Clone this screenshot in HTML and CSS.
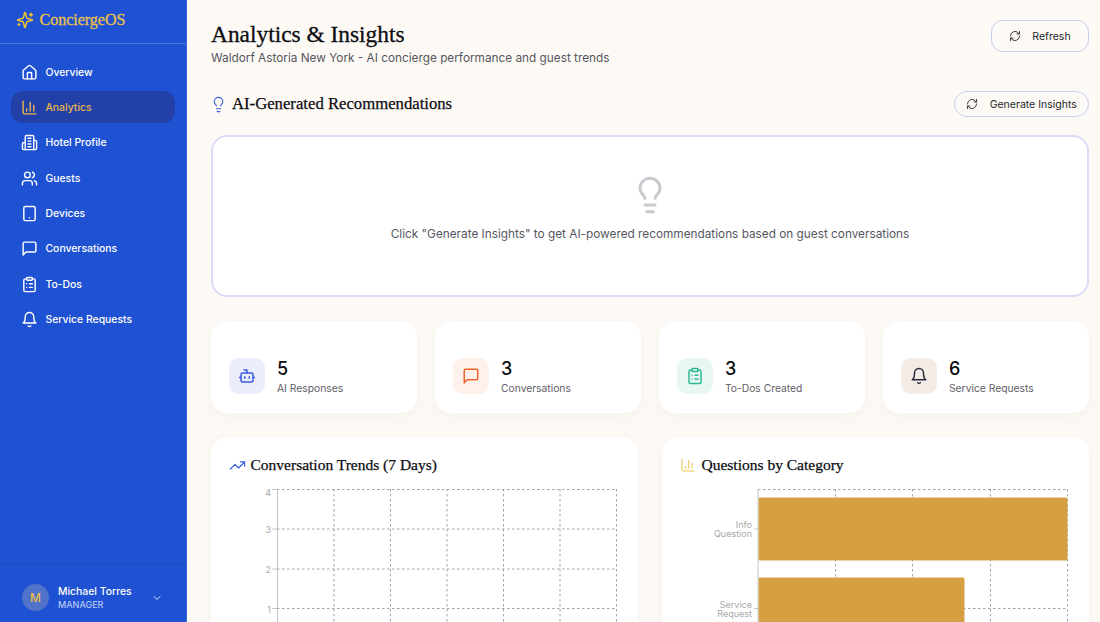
FILE: index.html
```html
<!DOCTYPE html>
<html lang="en">
<head>
    <meta charset="UTF-8">
    <meta name="viewport" content="width=device-width, initial-scale=1.0">
    <title>Analytics &amp; Insights - ConciergeOS</title>
    <link rel="stylesheet" href="styles.css">
</head>
<body>
    <!-- Icon set -->
    <svg class="icon-defs" aria-hidden="true">
        <symbol id="i-house" viewBox="0 0 24 24"><path d="M15 21v-8a1 1 0 0 0-1-1h-4a1 1 0 0 0-1 1v8"/><path d="M3 10a2 2 0 0 1 .709-1.528l7-5.999a2 2 0 0 1 2.582 0l7 5.999A2 2 0 0 1 21 10v9a2 2 0 0 1-2 2H5a2 2 0 0 1-2-2z"/></symbol>
        <symbol id="i-chart" viewBox="0 0 24 24"><path d="M3 3v16a2 2 0 0 0 2 2h16"/><path d="M18 17V9"/><path d="M13 17V5"/><path d="M8 17v-3"/></symbol>
        <symbol id="i-hotel" viewBox="0 0 24 24"><path d="M6 22V4a2 2 0 0 1 2-2h8a2 2 0 0 1 2 2v18Z"/><path d="M6 12H4a2 2 0 0 0-2 2v6a2 2 0 0 0 2 2h2"/><path d="M18 9h2a2 2 0 0 1 2 2v9a2 2 0 0 1-2 2h-2"/><path d="M10 6h4"/><path d="M10 10h4"/><path d="M10 14h4"/><path d="M10 18h4"/></symbol>
        <symbol id="i-users" viewBox="0 0 24 24"><path d="M16 21v-2a4 4 0 0 0-4-4H6a4 4 0 0 0-4 4v2"/><circle cx="9" cy="7" r="4"/><path d="M22 21v-2a4 4 0 0 0-3-3.87"/><path d="M16 3.13a4 4 0 0 1 0 7.75"/></symbol>
        <symbol id="i-tablet" viewBox="0 0 24 24"><rect x="4" y="2" width="16" height="20" rx="2"/><path d="M12 18h.01"/></symbol>
        <symbol id="i-message" viewBox="0 0 24 24"><path d="M21 15a2 2 0 0 1-2 2H7l-4 4V5a2 2 0 0 1 2-2h14a2 2 0 0 1 2 2z"/></symbol>
        <symbol id="i-clipboard" viewBox="0 0 24 24"><rect x="8" y="2" width="8" height="4" rx="1"/><path d="M16 4h2a2 2 0 0 1 2 2v14a2 2 0 0 1-2 2H6a2 2 0 0 1-2-2V6a2 2 0 0 1 2-2h2"/><path d="M12 11h4"/><path d="M12 16h4"/><path d="M8 11h.01"/><path d="M8 16h.01"/></symbol>
        <symbol id="i-bell" viewBox="0 0 24 24"><path d="M6 8a6 6 0 0 1 12 0c0 7 3 9 3 9H3s3-2 3-9"/><path d="M10.3 21a1.94 1.94 0 0 0 3.4 0"/></symbol>
        <symbol id="i-chevron" viewBox="0 0 24 24"><path d="m6 9 6 6 6-6"/></symbol>
        <symbol id="i-sparkles" viewBox="0 0 24 24"><path d="M9.937 15.5A2 2 0 0 0 8.5 14.063l-6.135-1.582a.5.5 0 0 1 0-.962L8.5 9.936A2 2 0 0 0 9.937 8.5l1.582-6.135a.5.5 0 0 1 .963 0L14.063 8.5A2 2 0 0 0 15.5 9.937l6.135 1.581a.5.5 0 0 1 0 .964L15.5 14.063a2 2 0 0 0-1.437 1.437l-1.582 6.135a.5.5 0 0 1-.963 0z"/><path d="M20 3v4"/><path d="M22 5h-4"/><path d="M4 17v2"/><path d="M5 18H3"/></symbol>
        <symbol id="i-bulb" viewBox="0 0 24 24"><path d="M15 14c.2-1 .7-1.7 1.5-2.5 1-.9 1.5-2.2 1.5-3.5A6 6 0 0 0 6 8c0 1 .2 2.2 1.5 3.5.7.7 1.3 1.5 1.5 2.5"/><path d="M9 18h6"/><path d="M10 22h4"/></symbol>
        <symbol id="i-refresh" viewBox="0 0 24 24"><path d="M3 12a9 9 0 0 1 9-9 9.75 9.75 0 0 1 6.74 2.74L21 8"/><path d="M21 3v5h-5"/><path d="M21 12a9 9 0 0 1-9 9 9.75 9.75 0 0 1-6.74-2.74L3 16"/><path d="M8 16H3v5"/></symbol>
        <symbol id="i-bot" viewBox="0 0 24 24"><path d="M12 8V4H8"/><rect x="4" y="8" width="16" height="12" rx="2"/><path d="M2 14h2"/><path d="M20 14h2"/><path d="M15 13v2"/><path d="M9 13v2"/></symbol>
        <symbol id="i-trend" viewBox="0 0 24 24"><path d="M22 7l-8.5 8.5-5-5L2 17"/><path d="M16 7h6v6"/></symbol>
    </svg>

    <div class="layout">
        <!-- Sidebar -->
        <aside class="sidebar">
            <div class="brand">
                <svg class="icon brand-icon"><use href="#i-sparkles"/></svg>
                <span class="brand-name">ConciergeOS</span>
            </div>
            <nav class="nav">
                <a href="#" class="nav-item"><svg class="icon"><use href="#i-house"/></svg>Overview</a>
                <a href="#" class="nav-item active"><svg class="icon"><use href="#i-chart"/></svg>Analytics</a>
                <a href="#" class="nav-item"><svg class="icon"><use href="#i-hotel"/></svg>Hotel Profile</a>
                <a href="#" class="nav-item"><svg class="icon"><use href="#i-users"/></svg>Guests</a>
                <a href="#" class="nav-item"><svg class="icon"><use href="#i-tablet"/></svg>Devices</a>
                <a href="#" class="nav-item"><svg class="icon"><use href="#i-message"/></svg>Conversations</a>
                <a href="#" class="nav-item"><svg class="icon"><use href="#i-clipboard"/></svg>To-Dos</a>
                <a href="#" class="nav-item"><svg class="icon"><use href="#i-bell"/></svg>Service Requests</a>
            </nav>
            <div class="user">
                <div class="avatar">M</div>
                <div class="user-info">
                    <div class="user-name">Michael Torres</div>
                    <div class="user-role">MANAGER</div>
                </div>
                <svg class="icon user-chevron"><use href="#i-chevron"/></svg>
            </div>
        </aside>

        <!-- Main content -->
        <main class="main">
            <header class="page-header">
                <div>
                    <h1 class="page-title">Analytics &amp; Insights</h1>
                    <p class="page-subtitle">Waldorf Astoria New York - AI concierge performance and guest trends</p>
                </div>
                <button class="btn btn-refresh"><svg class="icon"><use href="#i-refresh"/></svg>Refresh</button>
            </header>

            <section class="recs-header">
                <h2 class="recs-title"><svg class="icon recs-icon"><use href="#i-bulb"/></svg>AI-Generated Recommendations</h2>
                <button class="btn btn-generate"><svg class="icon"><use href="#i-refresh"/></svg>Generate Insights</button>
            </section>

            <section class="recs-panel">
                <svg class="icon recs-empty-icon"><use href="#i-bulb"/></svg>
                <p class="recs-empty">Click "Generate Insights" to get AI-powered recommendations based on guest conversations</p>
            </section>

            <section class="stats">
                <div class="stat-card">
                    <div class="stat-icon blue"><svg class="icon"><use href="#i-bot"/></svg></div>
                    <div class="stat-text"><div class="stat-value">5</div><div class="stat-label">AI Responses</div></div>
                </div>
                <div class="stat-card">
                    <div class="stat-icon orange"><svg class="icon"><use href="#i-message"/></svg></div>
                    <div class="stat-text"><div class="stat-value">3</div><div class="stat-label">Conversations</div></div>
                </div>
                <div class="stat-card">
                    <div class="stat-icon green"><svg class="icon"><use href="#i-clipboard"/></svg></div>
                    <div class="stat-text"><div class="stat-value">3</div><div class="stat-label">To-Dos Created</div></div>
                </div>
                <div class="stat-card">
                    <div class="stat-icon dark"><svg class="icon"><use href="#i-bell"/></svg></div>
                    <div class="stat-text"><div class="stat-value">6</div><div class="stat-label">Service Requests</div></div>
                </div>
            </section>

            <section class="charts">
                <div class="chart-card">
                    <h3 class="chart-title"><svg class="icon trend-icon"><use href="#i-trend"/></svg>Conversation Trends (7 Days)</h3>
                    <svg class="chart" width="391" height="240">
                        <g class="grid">
                            <path d="M48 5.5H388M48 45H388M48 85H388M48 124.5H388M48 164H388"/>
                            <path d="M105 5V204M161.500 5V204M218 5V204M274.500 5V204M331 5V204M387.500 5V204"/>
                        </g>
                        <path class="axis" d="M48.500 5V204M43 5.500H48M43 45H48M43 85H48M43 124.500H48"/>
                        <text class="tick" x="42" y="12" text-anchor="end">4</text>
                        <text class="tick" x="42" y="49" text-anchor="end">3</text>
                        <text class="tick" x="42" y="89" text-anchor="end">2</text>
                        <text class="tick" x="42" y="129" text-anchor="end">1</text>
                    </svg>
                </div>
                <div class="chart-card">
                    <h3 class="chart-title"><svg class="icon bars-icon"><use href="#i-chart"/></svg>Questions by Category</h3>
                    <svg class="chart" width="391" height="240">
                        <g class="grid">
                            <path d="M78 5.500H387.500M78 124.500H387.500"/>
                            <path d="M155.500 5V204M232.500 5V204M310.500 5V204M387.500 5V204"/>
                        </g>
                        <rect class="bar" x="78.500" y="13.500" width="309" height="63" rx="1.500"/>
                        <rect class="bar" x="78.500" y="93.500" width="206" height="63" rx="1.500"/>
                        <path class="axis" d="M78 5V204M74 45H78M74 124.500H78"/>
                        <text class="tick" x="72" y="44" text-anchor="end">Info</text>
                        <text class="tick" x="72" y="53" text-anchor="end">Question</text>
                        <text class="tick" x="72" y="124" text-anchor="end">Service</text>
                        <text class="tick" x="72" y="133" text-anchor="end">Request</text>
                    </svg>
                </div>
            </section>
        </main>
    </div>
</body>
</html>
```

FILE: styles.css
```css
* {
    box-sizing: border-box;
}

body {
    margin: 0;
    font-family: Inter, "Liberation Sans", sans-serif;
    background-color: #fdfaf6;
    color: #0d0d12;
    height: 100vh;
    overflow: hidden;
}

.icon-defs {
    display: none;
}

.icon {
    width: 17px;
    height: 17px;
    flex-shrink: 0;
    fill: none;
    stroke: currentColor;
    stroke-width: 2;
    stroke-linecap: round;
    stroke-linejoin: round;
}

.layout {
    display: flex;
    height: 100vh;
}

/* Sidebar */
.sidebar {
    width: 187px;
    flex-shrink: 0;
    display: flex;
    flex-direction: column;
    background-color: #1f52d3;
    border-right: 1px solid #3565dc;
    color: #fff;
}

.brand {
    height: 44px;
    display: flex;
    align-items: center;
    gap: 5.500px;
    padding: 0 0 4px 16px;
    border-bottom: 1px solid #4a74dd;
    color: #f2c230;
}

.brand-icon {
    width: 18px;
    height: 18px;
}

.brand-name {
    font-family: "Liberation Serif", serif;
    font-size: 16px;
    -webkit-text-stroke: 0.3px #ecc046;
    color: #ecc046;
}

.nav {
    flex: 1;
    padding: 12px 11px 0;
}

.nav-item {
    height: 32px;
    margin-bottom: 3.4px;
    display: flex;
    align-items: center;
    gap: 7.500px;
    padding-left: 10px;
    border-radius: 12px;
    color: #fff;
    font-size: 10.400px;
    font-weight: 500;
    text-decoration: none;
}

.nav-item.active {
    background-color: #2340a8;
    color: #e7b54c;
}

.user {
    height: 59px;
    display: flex;
    align-items: center;
    padding: 9px 0 0 22px;
    border-top: 1px solid #1c49bd;
}

.avatar {
    width: 27px;
    height: 27px;
    border-radius: 50%;
    background-color: #5273ca;
    color: #e9bb50;
    font-size: 12px;
    font-weight: 500;
    display: flex;
    align-items: center;
    justify-content: center;
}

.user-info {
    flex: 1;
    margin-left: 9px;
}

.user-name {
    margin-top: 1px;
    font-size: 10.400px;
    font-weight: 500;
    line-height: 13px;
}

.user-role {
    font-size: 9px;
    font-weight: 500;
    line-height: 13px;
    color: #b6c7f3;
}

.user-chevron {
    width: 12px;
    height: 12px;
    margin-right: 23px;
    color: #dbe3fa;
}

/* Main content */
.main {
    flex: 1;
    min-width: 0;
    padding: 20px 11px 0 24px;
    overflow: hidden;
}

.page-header {
    display: flex;
    justify-content: space-between;
    align-items: flex-start;
    height: 71px;
}

.page-title {
    margin: 0;
    font-family: "Liberation Serif", serif;
    font-size: 23.400px;
    font-weight: 400;
    line-height: 28px;
    -webkit-text-stroke: 0.3px #0d0d12;
}

.page-subtitle {
    margin: 2px 0 0;
    font-size: 11.800px;
    line-height: 17px;
    color: #55565f;
}

.btn {
    display: flex;
    align-items: center;
    justify-content: center;
    background-color: transparent;
    border: 1px solid #c6d0f3;
    font-family: inherit;
    font-size: 10.500px;
    color: #25262c;
    cursor: pointer;
}

.btn .icon {
    width: 12px;
    height: 12px;
    stroke-width: 1.8;
}

.btn-refresh {
    width: 98px;
    height: 32px;
    gap: 11px;
    border-radius: 12px;
}

.btn-generate {
    width: 135px;
    height: 26px;
    gap: 11.500px;
    border-radius: 13px;
}

.recs-header {
    display: flex;
    justify-content: space-between;
    align-items: center;
    height: 26px;
    margin-bottom: 18px;
}

.recs-title {
    margin: 0;
    display: flex;
    align-items: center;
    gap: 5.500px;
    font-family: "Liberation Serif", serif;
    font-size: 16.700px;
    font-weight: 400;
    -webkit-text-stroke: 0.25px #0d0d12;
}

.recs-icon {
    margin-left: -1.500px;
    color: #3f5fe0;
    stroke-width: 1.6;
}

.recs-panel {
    height: 162px;
    display: flex;
    flex-direction: column;
    align-items: center;
    padding-top: 38px;
    background-color: #fff;
    border: 2px solid #d9dcf6;
    border-radius: 16px;
}

.recs-empty-icon {
    width: 40px;
    height: 40px;
    color: #c9cacf;
    stroke-width: 1.8;
}

.recs-empty {
    margin: 12px 0 0;
    font-size: 11.800px;
    color: #55565f;
}

.stats {
    display: grid;
    grid-template-columns: repeat(4, 1fr);
    gap: 18px;
    margin-top: 24px;
}

.stat-card {
    height: 92px;
    display: flex;
    align-items: flex-end;
    gap: 12px;
    padding: 0 18px 19px;
    background-color: #fff;
    border-radius: 16px;
    box-shadow: 0 4px 14px rgba(90, 70, 40, 0.05);
}

.stat-icon {
    width: 36px;
    height: 36px;
    border-radius: 10px;
    display: flex;
    align-items: center;
    justify-content: center;
}

.stat-icon .icon {
    width: 18px;
    height: 18px;
}

.stat-icon.blue {
    background-color: #ebedfd;
    color: #3b5be0;
}

.stat-icon.orange {
    background-color: #fef0ea;
    color: #f0622a;
}

.stat-icon.green {
    background-color: #e9f7f4;
    color: #2fb894;
}

.stat-icon.dark {
    background-color: #f3ece6;
    color: #2a2a3a;
}

.stat-text {
    margin-bottom: -1px;
}

.stat-value {
    font-size: 18px;
    font-weight: 500;
    line-height: 22px;
    color: #0b0b0f;
}

.stat-label {
    margin-top: 1px;
    font-size: 10.300px;
    line-height: 14px;
    color: #5f6068;
}

.charts {
    display: grid;
    grid-template-columns: 427px 427px;
    justify-content: space-between;
    margin-top: 24px;
}

.chart-card {
    height: 260px;
    padding: 18px 18px 0;
    background-color: #fff;
    border-radius: 16px;
    box-shadow: 0 4px 14px rgba(90, 70, 40, 0.05);
}

.chart-title {
    margin: 0;
    height: 20px;
    display: flex;
    align-items: center;
    gap: 4.500px;
    font-family: "Liberation Serif", serif;
    font-size: 15.500px;
    font-weight: 400;
    -webkit-text-stroke: 0.25px #0d0d12;
}

.trend-icon {
    color: #3b5be0;
    stroke-width: 1.7;
}

.bars-icon {
    width: 16px;
    height: 16px;
    margin-right: 1px;
    color: #eec34a;
    stroke-width: 1.5;
}

.chart {
    display: block;
    margin-top: 9px;
}

.grid path {
    fill: none;
    stroke: #a3a3a9;
    stroke-width: 1;
    stroke-dasharray: 2.500 2.500;
}

.axis {
    fill: none;
    stroke: #c4c2c6;
    stroke-width: 1;
}

.tick {
    font-family: Inter, "Liberation Sans", sans-serif;
    font-size: 9px;
    fill: #a9a8ad;
}

.bar {
    fill: #d6a042;
}
```
